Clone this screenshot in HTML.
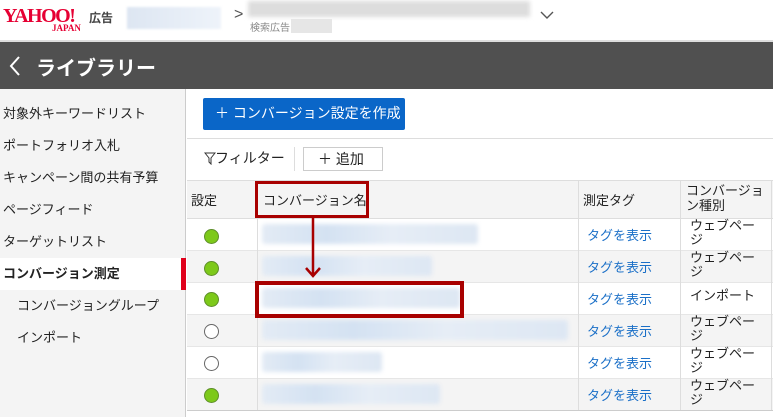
<!DOCTYPE html><html><head><meta charset="utf-8"><style>
*{margin:0;padding:0;box-sizing:border-box}
body{width:773px;height:417px;overflow:hidden;background:#fff;font-family:"Liberation Sans","Noto Sans CJK JP",sans-serif;color:#222;position:relative}
.a{position:absolute}
.t{font-size:13px;white-space:nowrap}
.blur{position:absolute;height:20px;background:linear-gradient(90deg,#e3ebf5,#d4e2f2 30%,#e6edf6 60%,#dde7f3);filter:blur(2px);border-radius:3px}
.dot{position:absolute;left:204px;width:15px;height:15px;border-radius:50%;background:#7dc91a;border:1px solid #5e8f2a}
.dot.e{background:#fff;border:1px solid #666}
.lnk{position:absolute;left:587px;color:#1a6fc7;font-size:13px}
.typ{position:absolute;left:690px;font-size:13px;line-height:14px;width:85px;white-space:nowrap}
</style></head><body>
<div class="a" style="left:3px;top:6px;color:#e60033;font-family:'Liberation Serif',serif;font-weight:bold;font-size:20px;letter-spacing:-1.5px;line-height:20px">YAHOO!</div>
<div class="a" style="left:52px;top:23px;color:#e60033;font-family:'Liberation Serif',serif;font-weight:bold;font-size:9px">JAPAN</div>
<div class="a t" style="left:89px;top:9px;font-size:12px;color:#444;font-weight:bold">広告</div>
<div class="a" style="left:127px;top:7px;width:94px;height:22px;background:linear-gradient(90deg,#dde6f2,#eef3fa);filter:blur(1px)"></div>
<div class="a" style="left:234px;top:6px;font-size:16px;color:#555">&gt;</div>
<div class="a" style="left:248px;top:1px;width:282px;height:16px;background:#ddd;filter:blur(2px)"></div>
<div class="a t" style="left:250px;top:19px;font-size:10px;color:#888">検索広告</div>
<div class="a" style="left:291px;top:19px;width:41px;height:14px;background:#e6e6e6"></div>
<svg class="a" style="left:540px;top:10px" width="14" height="10"><path d="M1 2l6 6 6-6" stroke="#555" fill="none" stroke-width="1.4"/></svg>
<div class="a" style="left:0;top:40px;width:773px;height:2px;background:#ddd"></div>
<div class="a" style="left:0;top:42px;width:773px;height:47px;background:#505050"></div>
<svg class="a" style="left:8px;top:55px" width="14" height="22"><path d="M11 2L3 11l8 9" stroke="#fff" fill="none" stroke-width="2"/></svg>
<div class="a t" style="left:36px;top:52px;font-size:20px;color:#fff;font-weight:bold">ライブラリー</div>
<div class="a" style="left:0;top:89px;width:186px;height:328px;background:#f4f4f4;border-right:1px solid #ccc"></div>
<div class="a" style="left:0;top:258px;width:186px;height:32px;background:#fff"></div>
<div class="a" style="left:181px;top:258px;width:5px;height:32px;background:#e0001b"></div>
<div class="a t" style="left:3px;top:103px">対象外キーワードリスト</div>
<div class="a t" style="left:3px;top:135px">ポートフォリオ入札</div>
<div class="a t" style="left:3px;top:167px">キャンペーン間の共有予算</div>
<div class="a t" style="left:3px;top:199px">ページフィード</div>
<div class="a t" style="left:3px;top:231px">ターゲットリスト</div>
<div class="a t" style="left:3px;top:263px;font-weight:bold">コンバージョン測定</div>
<div class="a t" style="left:17px;top:295px">コンバージョングループ</div>
<div class="a t" style="left:17px;top:327px">インポート</div>
<div class="a t" style="left:203px;top:98px;width:202px;height:32px;background:#0a66c8;border-radius:2px;color:#fff;font-size:14px;padding:5px 0 0 12px">＋ コンバージョン設定を作成</div>
<div class="a" style="left:187px;top:138px;width:586px;height:1px;background:#ddd"></div>
<svg class="a" style="left:204px;top:152px" width="12" height="13"><path d="M1 1h10L7 6v6L5 10V6z" stroke="#333" fill="none"/></svg>
<div class="a t" style="left:215px;top:148px;font-size:14px">フィルター</div>
<div class="a" style="left:294px;top:147px;width:1px;height:24px;background:#ddd"></div>
<div class="a t" style="left:303px;top:147px;width:80px;height:24px;border:1px solid #ccc;font-size:14px;padding:1px 0 0 14px">＋ 追加</div>
<div class="a" style="left:187px;top:180px;width:586px;height:1px;background:#ddd"></div>
<div class="a" style="left:187px;top:181px;width:586px;height:37px;background:#f4f4f4"></div>
<div class="a" style="left:187px;top:250px;width:586px;height:32px;background:#f4f4f4"></div>
<div class="a" style="left:187px;top:314px;width:586px;height:32px;background:#f4f4f4"></div>
<div class="a" style="left:187px;top:378px;width:586px;height:32px;background:#f4f4f4"></div>
<div class="a" style="left:187px;top:218px;width:586px;height:1px;background:#ddd"></div>
<div class="a" style="left:187px;top:250px;width:586px;height:1px;background:#e6e6e6"></div>
<div class="a" style="left:187px;top:282px;width:586px;height:1px;background:#e6e6e6"></div>
<div class="a" style="left:187px;top:314px;width:586px;height:1px;background:#e6e6e6"></div>
<div class="a" style="left:187px;top:346px;width:586px;height:1px;background:#e6e6e6"></div>
<div class="a" style="left:187px;top:378px;width:586px;height:1px;background:#e6e6e6"></div>
<div class="a" style="left:187px;top:410px;width:586px;height:1px;background:#ccc"></div>
<div class="a" style="left:257px;top:181px;width:1px;height:229px;background:#ddd"></div>
<div class="a" style="left:578px;top:181px;width:1px;height:229px;background:#ddd"></div>
<div class="a" style="left:680px;top:181px;width:1px;height:229px;background:#ddd"></div>
<div class="a" style="left:771px;top:181px;width:1px;height:229px;background:#ddd"></div>
<div class="a t" style="left:191px;top:190px">設定</div>
<div class="a t" style="left:263px;top:190px">コンバージョン名</div>
<div class="a t" style="left:583px;top:190px">測定タグ</div>
<div class="typ" style="left:686px;top:183px;line-height:15px">コンバージョ<br>ン種別</div>
<div class="blur" style="left:262px;top:224px;width:216px"></div>
<div class="blur" style="left:262px;top:256px;width:170px"></div>
<div class="blur" style="left:262px;top:288px;width:198px"></div>
<div class="blur" style="left:262px;top:320px;width:306px"></div>
<div class="blur" style="left:262px;top:352px;width:120px"></div>
<div class="blur" style="left:262px;top:384px;width:178px"></div>
<div class="dot" style="top:229px"></div><div class="dot" style="top:261px"></div><div class="dot" style="top:292px"></div>
<div class="dot e" style="top:324px"></div><div class="dot e" style="top:356px"></div><div class="dot" style="top:388px"></div>
<div class="lnk" style="top:225px">タグを表示</div><div class="lnk" style="top:257px">タグを表示</div><div class="lnk" style="top:289px">タグを表示</div>
<div class="lnk" style="top:321px">タグを表示</div><div class="lnk" style="top:353px">タグを表示</div><div class="lnk" style="top:385px">タグを表示</div>
<div class="typ" style="top:219px">ウェブペー<br>ジ</div>
<div class="typ" style="top:251px">ウェブペー<br>ジ</div>
<div class="typ" style="top:289px">インポート</div>
<div class="typ" style="top:315px">ウェブペー<br>ジ</div>
<div class="typ" style="top:347px">ウェブペー<br>ジ</div>
<div class="typ" style="top:379px">ウェブペー<br>ジ</div>
<div class="a" style="left:255px;top:181px;width:114px;height:37px;border:3px solid #a80000"></div>
<div class="a" style="left:255px;top:281px;width:209px;height:37px;border:4px solid #a80000"></div>
<svg class="a" style="left:303px;top:216px" width="20" height="64"><path d="M10 0v60M3 52l7 8 7-8" stroke="#a80000" fill="none" stroke-width="2.5"/></svg>
</body></html>
